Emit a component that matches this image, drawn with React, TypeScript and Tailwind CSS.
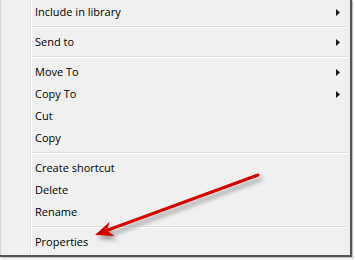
type Entry = { label: string; submenu?: boolean } | 'sep';

const entries: Entry[] = [
  { label: 'Include in library', submenu: true },
  'sep',
  { label: 'Send to', submenu: true },
  'sep',
  { label: 'Move To', submenu: true },
  { label: 'Copy To', submenu: true },
  { label: 'Cut' },
  { label: 'Copy' },
  'sep',
  { label: 'Create shortcut' },
  { label: 'Delete' },
  { label: 'Rename' },
  'sep',
  { label: 'Properties' },
];

function SubmenuArrow() {
  return (
    <svg width="4" height="7" viewBox="0 0 4 7" aria-hidden>
      <polygon points="0,0 4,3.5 0,7" fill="#1a1a1a" />
    </svg>
  );
}

function RedArrow() {
  return (
    <svg
      className="pointer-events-none absolute left-0 top-0"
      width="355"
      height="260"
      viewBox="0 0 355 260"
      aria-hidden
    >
      <defs>
        <filter id="arrow-shadow" x="-20%" y="-50%" width="140%" height="200%">
          <feDropShadow dx="3" dy="4" stdDeviation="2" floodColor="#000" floodOpacity="0.35" />
        </filter>
      </defs>
      <g filter="url(#arrow-shadow)">
        <line x1="258" y1="175" x2="108" y2="230" stroke="#d40000" strokeWidth="3" strokeLinecap="round" />
        <polygon points="95,235 109.5,222 107,230.5 114.5,236" fill="#d40000" />
      </g>
    </svg>
  );
}

export default function App() {
  return (
    <div className="relative h-[260px] w-[355px] overflow-hidden bg-[#f8f8f8] font-['Open_Sans',sans-serif] text-[11px] text-black">
      <div className="flex h-[257px] w-[352px] border-b-2 border-r-2 border-[#555] bg-[#f0f0f0] shadow-[1px_1px_1px_rgba(0,0,0,0.2)]">
        <div className="w-[31px] shrink-0 border-l border-r border-l-[#d6d6d6] border-r-[#e0e0e0]" />
        <div className="flex flex-1 flex-col border-l border-white pt-px">
          {entries.map((entry, i) =>
            entry === 'sep' ? (
              <div key={i} className="flex h-[8px] flex-col justify-center pr-[2px]">
                <div className="h-px bg-[#e0e0e0]" />
                <div className="h-px bg-white" />
              </div>
            ) : (
              <div key={i} className="flex h-[22px] items-center justify-between pl-[3px] pr-[10px]">
                <span>{entry.label}</span>
                {entry.submenu && <SubmenuArrow />}
              </div>
            ),
          )}
        </div>
      </div>
      <RedArrow />
    </div>
  );
}
